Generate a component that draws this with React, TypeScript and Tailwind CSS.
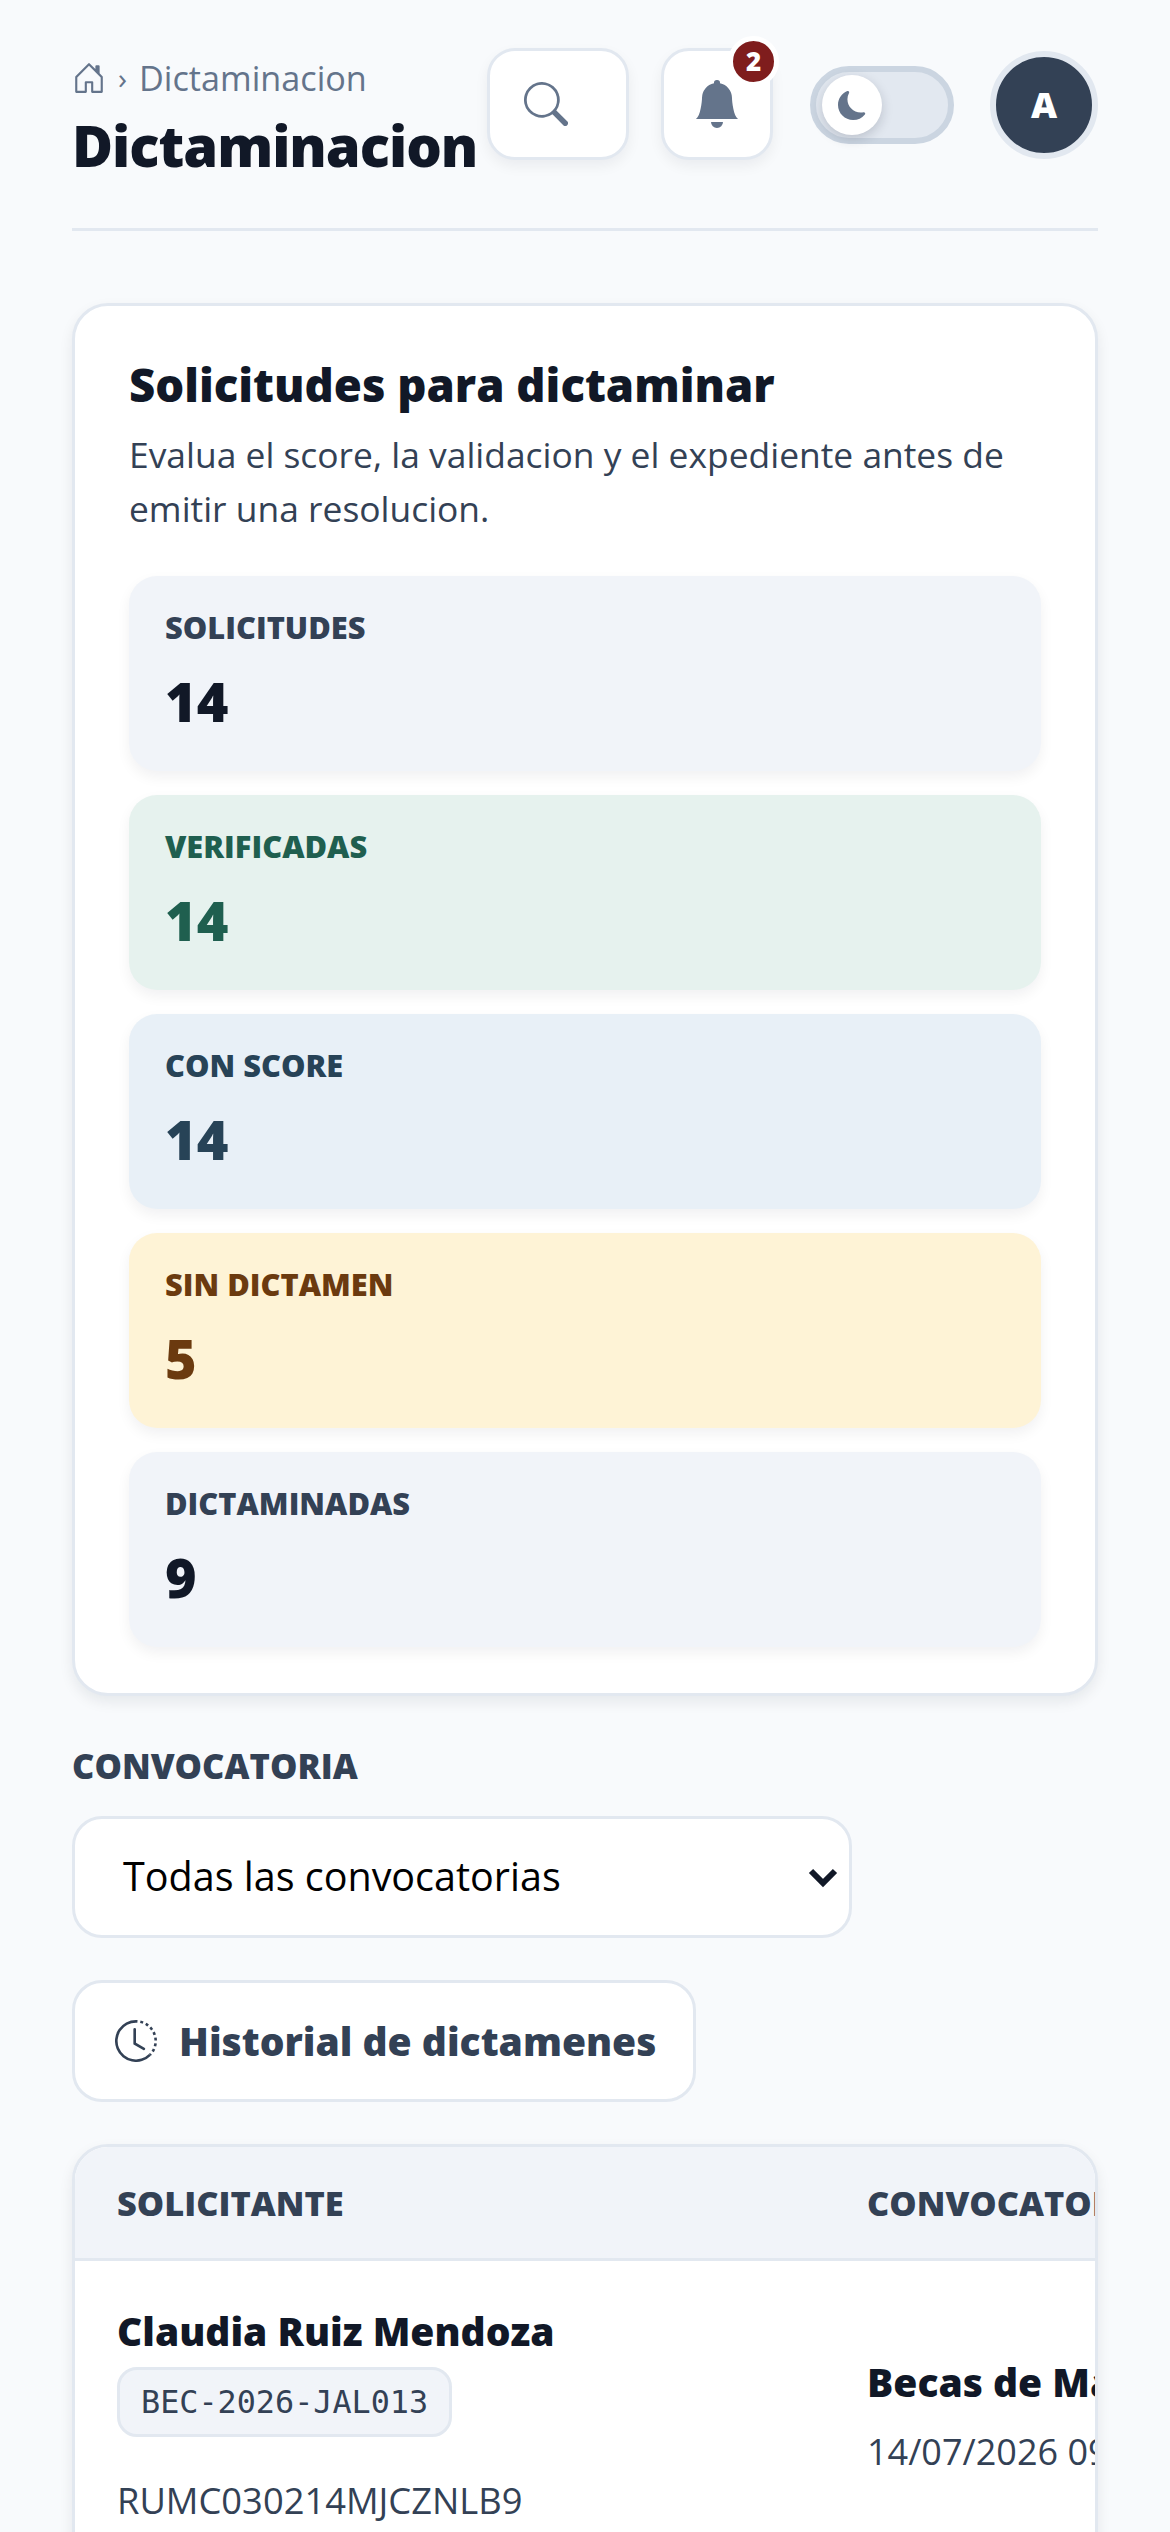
import { BsBellFill, BsClockHistory, BsHouseDoor, BsMoonFill, BsSearch } from "react-icons/bs";

const STATS = [
  { label: "SOLICITUDES", value: "14", box: "bg-[#f1f4f9]", labelColor: "text-[#334155]", valueColor: "text-[#111827]" },
  { label: "VERIFICADAS", value: "14", box: "bg-[#e6f2ee]", labelColor: "text-[#1f5f4f]", valueColor: "text-[#1f5f4f]" },
  { label: "CON SCORE", value: "14", box: "bg-[#e8f0f7]", labelColor: "text-[#274357]", valueColor: "text-[#274357]" },
  { label: "SIN DICTAMEN", value: "5", box: "bg-[#fef3d6]", labelColor: "text-[#6b3a0f]", valueColor: "text-[#6b3a0f]" },
  { label: "DICTAMINADAS", value: "9", box: "bg-[#f1f4f9]", labelColor: "text-[#334155]", valueColor: "text-[#111827]" },
];

const Header = () => (
  <header className="flex h-[231px] items-start justify-between border-b-[3px] border-[#e2e8f0] pt-[48px]">
    <div className="w-[415px] pt-[8px]">
      <div className="flex items-center gap-[12px] text-[34.2px] leading-[44px] text-[#64748b]">
        <BsHouseDoor className="h-[34px] w-[34px]" />
        <span className="text-[30px]">›</span>
        <span>Dictaminacion</span>
      </div>
      <h1 className="mt-[9px] whitespace-nowrap text-[56px] font-extrabold leading-[72px] tracking-[-1px] text-[#111827]">Dictaminacion</h1>
    </div>
    <div className="flex items-start">
      <button type="button" className="flex h-[112px] w-[142px] items-center rounded-[28px] border-[3px] border-[#e2e8f0] bg-white pl-[34px] shadow-[0_6px_14px_rgba(15,23,42,0.06)]">
        <BsSearch className="h-[44px] w-[44px] text-[#64748b]" />
      </button>
      <button type="button" className="relative ml-[32px] flex h-[112px] w-[112px] items-center justify-center rounded-[28px] border-[3px] border-[#e2e8f0] bg-white shadow-[0_6px_14px_rgba(15,23,42,0.06)]">
        <BsBellFill className="h-[48px] w-[48px] text-[#64748b]" />
        <span className="absolute -right-[9px] -top-[15px] flex h-[51px] w-[51px] items-center justify-center rounded-full border-[5px] border-white bg-[#7f1d1d] text-[26px] font-extrabold text-white">2</span>
      </button>
      <div className="ml-[37px] mt-[18px] flex h-[78px] w-[144px] items-center rounded-full border-[6px] border-[#cbd5e1] bg-[#e2e8f0] pl-[6px]">
        <span className="flex h-[60px] w-[60px] items-center justify-center rounded-full bg-white shadow-[0_4px_12px_rgba(15,23,42,0.18)]">
          <BsMoonFill className="h-[29px] w-[29px] text-[#64748b]" />
        </span>
      </div>
      <div className="ml-[36px] mt-[3px] flex h-[108px] w-[108px] items-center justify-center rounded-full border-[6px] border-[#e2e8f0] bg-[#334155] text-[36px] font-extrabold text-white">A</div>
    </div>
  </header>
);

const App = () => (
  <div className="h-[2532px] overflow-hidden bg-[#f8fafc] px-[72px] font-['Open_Sans',sans-serif]">
    <Header />

    <section className="mt-[72px] rounded-[36px] border-[3px] border-[#e2e8f0] bg-white px-[54px] pb-[46px] pt-[48px] shadow-[0_6px_14px_rgba(15,23,42,0.08)]">
      <h2 className="text-[45.5px] font-extrabold leading-[60px] text-[#111827]">Solicitudes para dictaminar</h2>
      <p className="mt-[13px] text-[35.4px] leading-[54px] text-[#334155]">Evalua el score, la validacion y el expediente antes de emitir una resolucion.</p>
      <div className="mt-[41px] flex flex-col gap-[24px]">
        {STATS.map((stat) => (
          <div key={stat.label} className={`h-[195px] rounded-[28px] px-[36px] pt-[31px] shadow-[0_6px_14px_rgba(15,23,42,0.06)] ${stat.box}`}>
            <div className={`text-[30.8px] font-extrabold leading-[40px] ${stat.labelColor}`}>{stat.label}</div>
            <div className={`mt-[18px] text-[54px] font-extrabold leading-[72px] ${stat.valueColor}`}>{stat.value}</div>
          </div>
        ))}
      </div>
    </section>

    <label className="mt-[46px] block text-[34.5px] font-extrabold leading-[48px] text-[#334155]">CONVOCATORIA</label>
    <div className="mt-[26px] flex h-[122px] w-[780px] items-center justify-between rounded-[30px] border-[3px] border-[#e2e8f0] bg-white pl-[48px] pr-[10px] text-[39.5px] text-black">
      <span>Todas las convocatorias</span>
      <svg viewBox="0 0 16 16" className="h-[32px] w-[32px]" fill="none" stroke="#111827" strokeWidth="3">
        <path d="M2 5l6 6 6-6" />
      </svg>
    </div>

    <button type="button" className="mt-[42px] flex h-[122px] w-[624px] items-center gap-[22px] rounded-[30px] border-[3px] border-[#e2e8f0] bg-white pl-[40px] text-[39px] font-extrabold text-[#334155]">
      <BsClockHistory className="h-[42px] w-[42px]" />
      Historial de dictamenes
    </button>

    <div className="mt-[42px] overflow-hidden rounded-[36px] border-[3px] border-[#e2e8f0] bg-white shadow-[0_6px_14px_rgba(15,23,42,0.08)]">
      <div className="flex h-[114px] items-center whitespace-nowrap border-b-[3px] border-[#e2e8f0] bg-[#f1f4f9] pl-[42px] text-[34.4px] font-extrabold text-[#334155]">
        <div className="w-[750px] shrink-0">SOLICITANTE</div>
        <div className="shrink-0">CONVOCATORIA</div>
      </div>
      <div className="flex h-[400px] whitespace-nowrap pl-[42px]">
        <div className="w-[750px] shrink-0 pt-[44px]">
          <div className="text-[39px] font-extrabold leading-[52px] text-[#111827]">Claudia Ruiz Mendoza</div>
          <span className="mt-[10px] inline-block rounded-[20px] border-[3px] border-[#e2e8f0] bg-[#f1f4f9] px-[21px] py-[10px] font-['DejaVu_Sans_Mono',monospace] text-[31.8px] leading-[44px] text-[#334155]">BEC-2026-JAL013</span>
          <div className="mt-[39px] text-[36.3px] leading-[48px] text-[#334155]">RUMC030214MJCZNLB9</div>
        </div>
        <div className="shrink-0 pt-[95px]">
          <div className="text-[39px] font-extrabold leading-[52px] text-[#111827]">Becas de Manutencion</div>
          <div className="mt-[20px] text-[36px] leading-[48px] text-[#334155]">14/07/2026 09:00</div>
        </div>
      </div>
    </div>
  </div>
);

export default App;
